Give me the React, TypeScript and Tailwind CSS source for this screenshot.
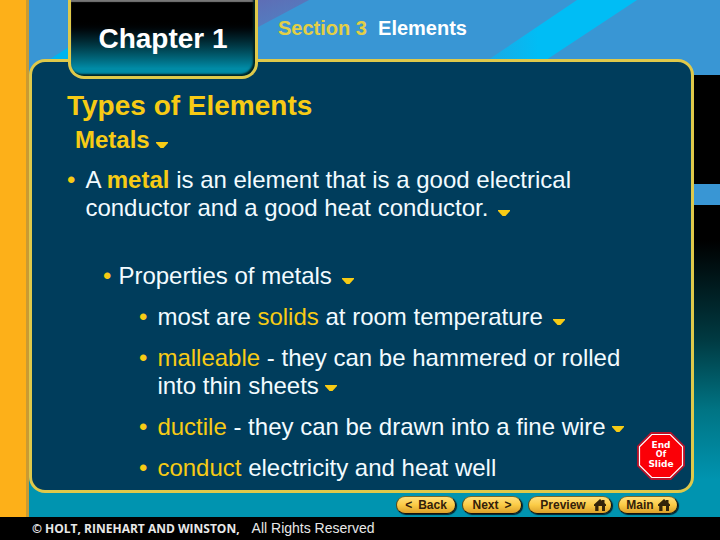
import type { ReactNode } from 'react'

// --- Icons -------------------------------------------------------------------

function Marker({ className = 'ml-[6px]' }: { className?: string }) {
  return (
    <svg viewBox="0 0 12 6" className={`inline-block h-[6px] w-[12px] ${className}`} aria-hidden="true">
      <path d="M0 0H12V1L7.5 6H4.5L0 1Z" fill="#f7cb15" />
    </svg>
  )
}

function HomeIcon() {
  return (
    <svg viewBox="0 0 12 12" className="h-[12px] w-[12px]" aria-hidden="true">
      <path d="M6 0L8 1.8V1H10.5V4L12 5.5V7H11V12H8V7H4.5V12H1.2V7H0V5.5Z" fill="#33240a" />
    </svg>
  )
}

function EndOfSlide() {
  return (
    <svg viewBox="0 0 48 48" className="h-[48px] w-[48px]" role="img" aria-label="End of slide">
      <path d="M14 0H34L48 14V34L34 48H14L0 34V14Z" fill="#b3122a" />
      <path d="M14.8 2.5H33.2L45.5 14.8V33.2L33.2 45.5H14.8L2.5 33.2V14.8Z" fill="#fb0007" stroke="#fff" strokeWidth="1.2" />
      <text fill="#fff" textAnchor="middle" fontFamily="DejaVu Sans, sans-serif" fontWeight="700" fontSize="9">
        <tspan x="24" y="16">End</tspan>
        <tspan x="24" y="25" fontSize="8">Of</tspan>
        <tspan x="24" y="35">Slide</tspan>
      </text>
    </svg>
  )
}

// --- Pieces ------------------------------------------------------------------

function NavButton({ children, className = '' }: { children: ReactNode; className?: string }) {
  return (
    <button
      type="button"
      className={`flex h-[18px] items-center justify-center rounded-full border border-t-[#7a6a28] border-r-[#14100a] border-b-[#14100a] border-l-[#5a4a18] bg-linear-to-b from-[#ffdf78] via-[#fbcb45] to-[#dba12a] text-[12px] leading-none font-bold text-[#33200a] shadow-[1px_1px_1px_#06222a] ${className}`}
    >
      {children}
    </button>
  )
}

function Point({ children, gap = 'gap-[10px]' }: { children: ReactNode; gap?: string }) {
  return (
    <div className={`flex ${gap}`}>
      <span className="text-[#f7cb15]" aria-hidden="true">•</span>
      <p>{children}</p>
    </div>
  )
}

function Backdrop() {
  return (
    <svg className="absolute top-0 left-0 h-[75px] w-full" aria-hidden="true">
      <defs>
        <linearGradient id="beam" x1="0" y1="0" x2="1" y2="0">
          <stop offset="0" stopColor="#1ca8e4" />
          <stop offset="0.35" stopColor="#00bdf5" />
          <stop offset="1" stopColor="#00bdf5" />
        </linearGradient>
        <linearGradient id="haze" x1="0" y1="0" x2="0.6" y2="1">
          <stop offset="0" stopColor="#5f6cb4" />
          <stop offset="1" stopColor="#4f82c4" />
        </linearGradient>
      </defs>
      <path d="M18 61L40 47V61Z" fill="#00b4ee" />
      <path d="M220 0H280L220 32Z" fill="url(#haze)" />
      <path d="M548 0H608L514 62H456Z" fill="url(#beam)" />
    </svg>
  )
}

// --- Slide -------------------------------------------------------------------

export default function App() {
  return (
    <div className="flex min-h-screen flex-col bg-black font-['Liberation_Sans',Arial,sans-serif]">
      <div className="flex flex-1">
        <div className="w-[29px] border-r-[3px] border-[#c99b33] bg-[#fdb019]" />

        <div className="relative flex flex-1 flex-col bg-[linear-gradient(to_bottom,#3996d4_75px,#000_75px,#000_184px,#3996d4_184px,#3996d4_205px,#000_205px,#000_240px,#003a42_340px,#007484_410px,#0094b0_480px)]">
          <Backdrop />

          <header className="relative z-10 -mb-5 flex h-[79px]">
            <div className="ml-[39px] flex w-[190px] justify-center rounded-b-2xl border-x-[3px] border-b-[3px] border-[#dfc94a] bg-linear-to-b from-black from-25% to-[#008ba6] to-90% pt-[23px] shadow-[inset_-2px_-2px_2px_#022,inset_0_2px_1px_#777]">
              <h2 className="text-[28px] leading-8 font-bold text-white">Chapter 1</h2>
            </div>
            <p className="mt-4 ml-5 text-xl leading-6 font-bold whitespace-pre text-white">
              <span className="text-[#e3cf45]">Section 3</span>{'  '}Elements
            </p>
          </header>

          <main className="relative mr-[26px] flex-1 rounded-2xl border-[3px] border-[#dfc94a] bg-[#003d5c] px-[35px] pt-7 text-2xl leading-7 text-[#f2fbff]">
            <h1 className="text-[28px] leading-8 font-bold text-[#f7cb15]">Types of Elements</h1>
            <h2 className="mt-1 ml-2 font-bold text-[#f7cb15]">
              Metals
              <Marker className="ml-[6px] align-baseline" />
            </h2>

            <div className="mt-3">
              <Point>
                A <b className="text-[#f7cb15]">metal</b> is an element that is a good electrical
                <br />
                conductor and a good heat conductor. <Marker className="ml-[3px] align-baseline" />
              </Point>
            </div>

            <div className="mt-10 ml-9">
              <Point gap="gap-[7px]">
                Properties of metals <Marker className="ml-[3px] align-baseline" />
              </Point>
              <div className="mt-[13px] ml-9 flex flex-col gap-[13px]">
                <Point>
                  most are <span className="text-[#f7cb15]">solids</span> at room temperature{' '}
                  <Marker className="ml-[3px] align-baseline" />
                </Point>
                <Point>
                  <span className="text-[#f7cb15]">malleable</span> - they can be hammered or rolled
                  <br />
                  into thin sheets
                  <Marker />
                </Point>
                <Point>
                  <span className="text-[#f7cb15]">ductile</span> - they can be drawn into a fine wire
                  <Marker />
                </Point>
                <Point>
                  <span className="text-[#f7cb15]">conduct</span> electricity and heat well
                </Point>
              </div>
            </div>

            <div className="absolute right-[6px] bottom-[10px]">
              <EndOfSlide />
            </div>
          </main>

          <nav className="relative mr-[42px] flex h-6 items-center justify-end gap-[6px]">
            <NavButton className="w-[60px] gap-[6px]">
              <span>&lt;</span>Back
            </NavButton>
            <NavButton className="w-[60px] gap-[6px]">
              Next<span>&gt;</span>
            </NavButton>
            <NavButton className="w-[84px] gap-2 pl-[6px]">
              Preview
              <HomeIcon />
            </NavButton>
            <NavButton className="w-[60px] gap-1">
              Main
              <HomeIcon />
            </NavButton>
          </nav>
        </div>
      </div>

      <footer className="flex h-[23px] items-center gap-3 px-8 text-[14px] text-[#e8e8e8]">
        <span className="font-['Open_Sans',sans-serif] text-[12px] font-bold">© HOLT, RINEHART AND WINSTON,</span>
        <span>All Rights Reserved</span>
      </footer>
    </div>
  )
}
